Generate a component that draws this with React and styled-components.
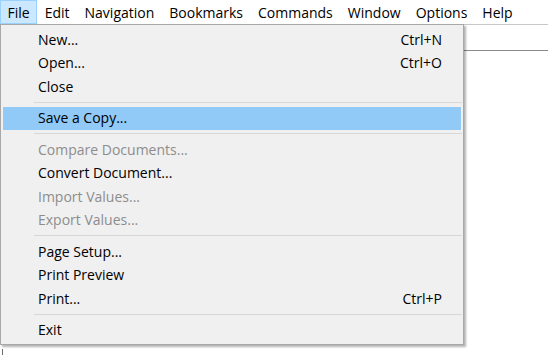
import React from 'react';
import styled, { createGlobalStyle } from 'styled-components';

const GlobalStyle = createGlobalStyle`
  html, body {
    margin: 0;
    padding: 0;
    background: #ffffff;
  }
  body {
    font-family: 'Open Sans', 'Noto Sans', sans-serif;
    font-size: 14px;
    color: #000000;
  }
`;

const Window = styled.div`
  width: 548px;
  height: 355px;
  overflow: hidden;
  position: relative;
  background: #ffffff;
`;

const MenuBar = styled.ul`
  display: flex;
  align-items: stretch;
  height: 24px;
  margin: 0;
  padding: 0;
  list-style: none;
  background: #ffffff;
`;

const BarItem = styled.li`
  display: flex;
  align-items: center;
  padding: 1px 6.5px 0;
  border: 1px solid ${(p) => (p.$open ? '#99d1ff' : 'transparent')};
  background: ${(p) => (p.$open ? '#cce8ff' : 'transparent')};
  line-height: 1;
  cursor: default;
`;

const Workspace = styled.div`
  position: relative;
  height: 331px;
  border-top: 1px solid #c8c8c8;
`;

const Strip = styled.div`
  height: 25px;
  border-bottom: 1px solid #8a8a8a;
`;

const EdgeMark = styled.div`
  position: absolute;
  left: 2px;
  bottom: 0;
  width: 1px;
  height: 7px;
  background: #6e6e6e;
`;

const Dropdown = styled.div`
  position: absolute;
  top: -1px;
  left: 0;
  width: 462px;
  padding: 3px 0 2px;
  background: #f0f0f0;
  border: 1px solid #a8a8a8;
  box-shadow: 2px 2px 2px rgba(0, 0, 0, 0.3);
`;

const Row = styled.div`
  display: flex;
  align-items: center;
  justify-content: space-between;
  height: 23.5px;
  margin: 0 2px;
  padding: 0 19px 0 35px;
  background: ${(p) => (p.$active ? '#91c9f7' : 'transparent')};
  color: ${(p) => (p.$disabled ? '#8d8d8d' : '#000000')};
  line-height: 1;
`;

const Shortcut = styled.span`
  color: inherit;
`;

const Separator = styled.div`
  height: 1px;
  margin: 3px 1px 4px 33px;
  background: #d7d7d7;
`;

const barItems = ['File', 'Edit', 'Navigation', 'Bookmarks', 'Commands', 'Window', 'Options', 'Help'];

const menu = [
  { label: 'New...', key: 'Ctrl+N' },
  { label: 'Open...', key: 'Ctrl+O' },
  { label: 'Close' },
  'sep',
  { label: 'Save a Copy...', active: true },
  'sep',
  { label: 'Compare Documents...', disabled: true },
  { label: 'Convert Document...' },
  { label: 'Import Values...', disabled: true },
  { label: 'Export Values...', disabled: true },
  'sep',
  { label: 'Page Setup...' },
  { label: 'Print Preview' },
  { label: 'Print...', key: 'Ctrl+P' },
  'sep',
  { label: 'Exit' },
];

export default function App() {
  return (
    <>
      <GlobalStyle />
      <Window>
        <MenuBar>
          {barItems.map((name) => (
            <BarItem key={name} $open={name === 'File'}>
              {name}
            </BarItem>
          ))}
        </MenuBar>
        <Workspace>
          <Strip />
          <EdgeMark />
          <Dropdown>
            {menu.map((item, i) =>
              item === 'sep' ? (
                <Separator key={i} />
              ) : (
                <Row key={i} $active={item.active} $disabled={item.disabled}>
                  <span>{item.label}</span>
                  {item.key && <Shortcut>{item.key}</Shortcut>}
                </Row>
              )
            )}
          </Dropdown>
        </Workspace>
      </Window>
    </>
  );
}
